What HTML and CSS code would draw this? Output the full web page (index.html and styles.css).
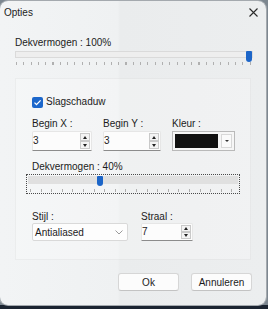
FILE: index.html
```html
<!DOCTYPE html>
<html lang="nl">
<head>
    <meta charset="UTF-8">
    <meta name="viewport" content="width=device-width, initial-scale=1.0">
    <title>Opties</title>
    <link rel="stylesheet" href="styles.css">
</head>
<body>
    <div class="dialog">
        <div class="title-bar">
            <span class="title">Opties</span>
            <svg class="close-icon" width="9" height="9" viewBox="0 0 9 9">
                <path d="M0.5 0.5L8.5 8.5M8.5 0.5L0.5 8.5" stroke="#2b2b2b" stroke-width="1.1" fill="none"/>
            </svg>
        </div>

        <div class="content">
            <div class="label">Dekvermogen : 100%</div>
            <div class="slider">
                <div class="slider-track"></div>
                <div class="slider-thumb" style="left: 231px;"></div>
                <div class="slider-ticks"></div>
            </div>

            <div class="group">
                <div class="check-row">
                    <span class="checkbox">
                        <svg width="11" height="11" viewBox="0 0 11 11">
                            <path d="M2.5 5.6L4.5 7.6L8.6 3.4" stroke="#fff" stroke-width="1.3" fill="none"/>
                        </svg>
                    </span>
                    <span>Slagschaduw</span>
                </div>

                <div class="field-row">
                    <div class="field">
                        <div class="label">Begin X :</div>
                        <div class="spin">
                            <span class="spin-value">3</span>
                            <span class="spin-buttons">
                                <span class="spin-btn spin-up"></span>
                                <span class="spin-btn spin-down"></span>
                            </span>
                        </div>
                    </div>
                    <div class="field">
                        <div class="label">Begin Y :</div>
                        <div class="spin">
                            <span class="spin-value">3</span>
                            <span class="spin-buttons">
                                <span class="spin-btn spin-up"></span>
                                <span class="spin-btn spin-down"></span>
                            </span>
                        </div>
                    </div>
                    <div class="field">
                        <div class="label">Kleur :</div>
                        <div class="color-picker">
                            <span class="color-swatch"></span>
                            <span class="color-arrow"></span>
                        </div>
                    </div>
                </div>

                <div class="label label-opacity">Dekvermogen : 40%</div>
                <div class="focus-box">
                    <div class="slider slider-small">
                        <div class="slider-track"></div>
                        <div class="slider-thumb" style="left: 69px;"></div>
                        <div class="slider-ticks"></div>
                    </div>
                </div>

                <div class="style-row">
                    <div class="field field-style">
                        <div class="label">Stijl :</div>
                        <div class="select">
                            <span>Antialiased</span>
                            <svg width="8" height="5" viewBox="0 0 8 5">
                                <path d="M0.5 0.5L4 4L7.5 0.5" stroke="#9a9a9a" stroke-width="1" fill="none"/>
                            </svg>
                        </div>
                    </div>
                    <div class="field field-radius">
                        <div class="label">Straal :</div>
                        <div class="spin spin-short">
                            <span class="spin-value">7</span>
                            <span class="spin-buttons">
                                <span class="spin-btn spin-up"></span>
                                <span class="spin-btn spin-down"></span>
                            </span>
                        </div>
                    </div>
                </div>
            </div>

            <div class="button-row">
                <button class="btn">Ok</button>
                <button class="btn">Annuleren</button>
            </div>
        </div>
    </div>
</body>
</html>
```

FILE: styles.css
```css
body {
    margin: 0;
    width: 268px;
    height: 309px;
    overflow: hidden;
    font-family: "Liberation Sans", Arial, sans-serif;
    font-size: 10px;
    color: #1b1b1b;
    background: linear-gradient(to bottom, #7d8790 0, #7d8790 305px, #1b2431 305px);
}

.dialog {
    width: 266px;
    height: 304px;
    margin-top: 1px;
    border-radius: 8px;
    overflow: hidden;
    background: linear-gradient(90deg, #f2f4f5 0, #eff1f2 118px, #eaeced 120px, #eceeef 100%);
    box-shadow: 0 0 0 1px #a4a9ae;
}

.title-bar {
    display: flex;
    align-items: center;
    justify-content: space-between;
    height: 22px;
    padding: 0 8px 0 4px;
}

.title {
    line-height: 12px;
    padding-top: 1px;
}

.content {
    padding: 14px 13px 0 15px;
}

.label {
    line-height: 12px;
    white-space: nowrap;
}

/* schuifbalk */
.slider {
    position: relative;
    margin-top: 1px;
}

.slider-track {
    height: 7px;
    margin-top: 2px;
    box-sizing: border-box;
    background-color: #eeeeee;
    border: 1px solid #dadada;
}

.slider-thumb {
    position: absolute;
    top: 0;
    width: 6px;
    height: 11px;
    background-color: #1c65c8;
    border-radius: 1px 1px 3px 3px;
}

.slider-ticks {
    height: 3px;
    margin-top: 4px;
    margin-left: 1px;
    background: repeating-linear-gradient(90deg, #b0b0b0 0, #b0b0b0 1px, transparent 1px, transparent 7.3px);
}

.group {
    margin-top: 13px;
    width: 236px;
    height: 182px;
    box-sizing: border-box;
    padding: 17px 0 0 16px;
    background-color: rgba(255, 255, 255, 0.25);
    border: 1px solid rgba(0, 0, 0, 0.04);
}

.check-row {
    display: flex;
    align-items: center;
    gap: 3px;
    height: 12px;
    line-height: 12px;
}

.checkbox {
    display: flex;
    width: 11px;
    height: 11px;
    background-color: #1c67cb;
    border-radius: 2px;
}

.field-row {
    display: grid;
    grid-template-columns: 60px 58px 63px;
    column-gap: 11px;
    margin-top: 10px;
}

.field .label {
    margin-bottom: 1px;
}

.spin {
    display: flex;
    height: 20px;
    box-sizing: border-box;
    background-color: #fcfcfc;
    border: 1px solid #e6e6e6;
    border-bottom-color: #8c8c8c;
    border-radius: 2px 2px 0 0;
}

.spin-short {
    height: 18px;
}

.spin-value {
    flex: 1;
    line-height: 18px;
}

.spin-short .spin-value {
    line-height: 16px;
}

.spin-buttons {
    display: flex;
    flex-direction: column;
    justify-content: center;
    width: 10px;
    margin-right: 1px;
}

.spin-btn {
    display: flex;
    align-items: center;
    justify-content: center;
    height: 8px;
    box-sizing: border-box;
    background-color: #f3f3f3;
    border: 1px solid #c9c9c9;
}

.spin-short .spin-btn {
    height: 7px;
}

.spin-up::after {
    content: "";
    border-left: 2px solid transparent;
    border-right: 2px solid transparent;
    border-bottom: 3px solid #222;
}

.spin-down::after {
    content: "";
    border-left: 2px solid transparent;
    border-right: 2px solid transparent;
    border-top: 3px solid #222;
}

.color-picker {
    display: flex;
    gap: 3px;
    height: 20px;
    box-sizing: border-box;
    padding: 2px;
    background-color: #f6f6f6;
    border: 1px solid #b9b9b9;
}

.color-swatch {
    flex: 1;
    background-color: #111;
}

.color-arrow {
    display: flex;
    align-items: center;
    justify-content: center;
    width: 11px;
    background-color: #fafafa;
    border: 1px solid #d8d8d8;
    box-sizing: border-box;
}

.color-arrow::after {
    content: "";
    border-left: 2px solid transparent;
    border-right: 2px solid transparent;
    border-top: 2px solid #333;
}

.label-opacity {
    margin-top: 10px;
}

.focus-box {
    width: 214px;
    height: 20px;
    box-sizing: border-box;
    margin: 1px 0 0 -6px;
    padding: 0 1px;
    border: 1px dotted #4a4a4a;
}

.slider-small {
    margin-top: 0;
}

.slider-small .slider-track {
    height: 8px;
    margin-top: 1px;
    background-color: #e0e0e0;
    border: none;
}

.slider-small .slider-thumb {
    height: 10px;
}

.slider-small .slider-ticks {
    margin-top: 5px;
    margin-left: 2px;
    background: repeating-linear-gradient(90deg, #b0b0b0 0, #b0b0b0 1px, transparent 1px, transparent 10.6px);
}

.style-row {
    display: flex;
    gap: 13px;
    margin-top: 17px;
}

.field-style {
    width: 96px;
}

.field-radius {
    width: 52px;
}

.field-style .label,
.field-radius .label {
    margin-bottom: 0;
}

.select {
    display: flex;
    align-items: center;
    justify-content: space-between;
    height: 18px;
    box-sizing: border-box;
    padding: 0 4px 0 2px;
    background-color: #fdfdfd;
    border: 1px solid #d9d9d9;
    border-radius: 2px;
}

.button-row {
    display: flex;
    justify-content: flex-end;
    gap: 12px;
    margin-top: 13px;
    padding-right: 1px;
}

.btn {
    width: 61px;
    height: 18px;
    padding: 0;
    font-family: "Liberation Sans", Arial, sans-serif;
    font-size: 10px;
    color: #1b1b1b;
    background-color: #fcfcfc;
    border: 1px solid #d6d6d6;
    border-bottom-color: #c3c3c3;
    border-radius: 3px;
}
```
